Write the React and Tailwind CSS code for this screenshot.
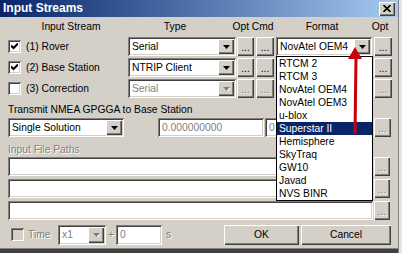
import React from 'react';

const sunken =
  'shadow-[inset_1px_1px_0_#808080,inset_-1px_-1px_0_#ffffff,inset_2px_2px_0_#404040,inset_-2px_-2px_0_#d4d0c8]';
const raised =
  'shadow-[inset_1px_1px_0_#ffffff,inset_-1px_-1px_0_#404040,inset_-2px_-2px_0_#808080]';
const grayText = 'text-[#808080] [text-shadow:1px_1px_0_#ffffff]';

const formats = [
  'RTCM 2',
  'RTCM 3',
  'NovAtel OEM4',
  'NovAtel OEM3',
  'u-blox',
  'Superstar II',
  'Hemisphere',
  'SkyTraq',
  'GW10',
  'Javad',
  'NVS BINR',
];

const Arrow = ({ disabled }) => (
  <svg width="7" height="4" viewBox="0 0 7 4" className="block">
    {disabled && <polygon points="1,1 8,1 4.5,4.5" fill="#ffffff" />}
    <polygon points="0,0 7,0 3.5,4" fill={disabled ? '#808080' : '#000000'} />
  </svg>
);

const Combo = ({ value, w, h = 'h-[19px]', disabled, className = '' }) => (
  <div className={`${sunken} bg-white flex p-[2px] ${h} ${w} ${className}`}>
    <div
      className={`flex-1 flex items-center pl-[2px] overflow-hidden whitespace-nowrap ${
        disabled ? 'text-[#808080]' : 'text-black'
      }`}
    >
      {value}
    </div>
    <div className={`${raised} bg-[#d4d0c8] w-[16px] flex items-center justify-center`}>
      <Arrow disabled={disabled} />
    </div>
  </div>
);

const Field = ({ value, w, h = 'h-[19px]', className = '' }) => (
  <div className={`${sunken} bg-white flex items-center pl-[4px] text-[#808080] ${h} ${w} ${className}`}>
    {value}
  </div>
);

const Dots = ({ w = 'w-[17px]', disabled, className = '' }) => (
  <div
    className={`${raised} bg-[#d4d0c8] h-[19px] ${w} flex items-end justify-center pb-[4px] leading-[9px] ${
      disabled ? grayText : 'text-black'
    } ${className}`}
  >
    ...
  </div>
);

const Check = ({ checked, disabled }) => (
  <div
    className={`${sunken} w-[13px] h-[13px] flex items-center justify-center ${
      disabled ? 'bg-[#d4d0c8]' : 'bg-white'
    }`}
  >
    {checked && (
      <svg width="7" height="7" viewBox="0 0 7 7" className="block">
        <path d="M0 2.5 L2.5 5 L7 0.5" stroke="#000" strokeWidth="2" fill="none" />
      </svg>
    )}
  </div>
);

// format value is only shown on the first row; the others sit under the open list
const StreamRow = ({ label, checked, type, format = '', typeDisabled, btnDisabled }) => (
  <div className="h-[19px] flex items-center">
    <div className="w-[128px] flex items-center pl-[8px]">
      <Check checked={checked} />
      <span className="ml-[5px]">{label}</span>
    </div>
    <Combo w="w-[108px]" value={type} disabled={typeDisabled} />
    <Dots className="ml-[1px]" disabled={btnDisabled} />
    <Dots className="ml-[2px]" w="w-[18px]" disabled={btnDisabled} />
    <Combo className="ml-[2px]" w="w-[96px]" value={format} />
    <Dots className="ml-[2px]" w="w-[18px]" disabled={btnDisabled} />
  </div>
);

export default function App() {
  return (
    <div className="w-[402px] h-[253px] flex bg-[#d4d0c8] overflow-hidden font-['Liberation_Sans',Arial,sans-serif] text-[10.3px] text-black">
      <div className="relative w-[398px] h-full flex flex-col">
        {/* title bar */}
        <div className="h-[17px] flex items-center justify-between bg-linear-to-r from-[#0a246a] to-[#a6caf0] pl-[3px] pr-[3px]">
          <span className="text-white font-bold text-[12px] leading-[17px]">Input Streams</span>
          <div className={`${raised} bg-[#d4d0c8] w-[16px] h-[14px] flex items-center justify-center`}>
            <svg width="8" height="7" viewBox="0 0 8 7" className="block">
              <path d="M0.5 0 L7.5 7 M7.5 0 L0.5 7" stroke="#000" strokeWidth="1.6" />
            </svg>
          </div>
        </div>

        {/* column headers */}
        <div className="h-[20px] flex items-center">
          <div className="w-[16px]" />
          <div className="w-[110px] text-center">Input Stream</div>
          <div className="w-[98px] text-center">Type</div>
          <div className="w-[58px] text-center">Opt Cmd</div>
          <div className="w-[80px] text-center">Format</div>
          <div className="w-[36px] text-center">Opt</div>
        </div>

        <div className="flex flex-col gap-[2px]">
          <StreamRow label="(1) Rover" checked type="Serial" format="NovAtel OEM4" />
          <StreamRow label="(2) Base Station" checked type="NTRIP Client" />
          <StreamRow label="(3) Correction" type="Serial" typeDisabled btnDisabled />
        </div>

        <div className="mt-[4px] h-[16px] flex items-center pl-[8px]">Transmit NMEA GPGGA to Base Station</div>

        <div className="h-[19px] flex items-center pl-[8px]">
          <Combo w="w-[116px]" value="Single Solution" />
          <Field className="ml-[34px]" w="w-[106px]" value="0.000000000" />
          <Field className="ml-[1px]" w="w-[108px]" value="0" />
          <Dots className="ml-[1px]" disabled />
        </div>

        <div className={`mt-[5px] h-[15px] flex items-center pl-[8px] ${grayText}`}>Input File Paths</div>

        <div className="flex flex-col gap-[3px]">
          {[0, 1, 2].map((i) => (
            <div key={i} className="h-[19px] flex items-center pl-[8px]">
              <Field w="w-[365px]" value="" />
              <Dots className="ml-[1px]" w="w-[16px]" disabled />
            </div>
          ))}
        </div>

        {/* bottom row */}
        <div className="mt-[4px] h-[21px] flex items-center">
          <div className="w-[58px] flex items-center pl-[11px]">
            <Check disabled />
            <span className={`ml-[4px] ${grayText}`}>Time</span>
          </div>
          <Combo w="w-[48px]" h="h-[20px]" value="x1" disabled />
          <div className={`w-[10px] text-center ${grayText}`}>+</div>
          <Field w="w-[46px]" h="h-[20px]" value="0" />
          <div className={`w-[62px] pl-[4px] ${grayText}`}>s</div>
          <div className={`${raised} bg-[#d4d0c8] w-[75px] h-[20px] flex items-center justify-center`}>OK</div>
          <div className={`${raised} bg-[#d4d0c8] ml-[2px] w-[90px] h-[20px] flex items-center justify-center`}>
            Cancel
          </div>
        </div>

        <div className="flex-1" />
        <div className="h-[5px] border-t border-[#808080] bg-[#404040]" />

        {/* open format dropdown */}
        <div className="absolute left-[276px] top-[56px] w-[97px] h-[145px] border border-black bg-white flex flex-col">
          {formats.map((f) => (
            <div
              key={f}
              className={`h-[13px] leading-[13px] pl-[2px] whitespace-nowrap ${
                f === 'Superstar II' ? 'bg-[#0a246a] text-white' : 'text-black'
              }`}
            >
              {f}
            </div>
          ))}
        </div>

        {/* annotation arrow */}
        <svg className="absolute left-0 top-0 pointer-events-none" width="398" height="253" viewBox="0 0 398 253">
          <line x1="355" y1="134" x2="356" y2="57" stroke="#c8000a" strokeWidth="3" />
          <polygon points="355,47 348,59 362,59" fill="#c8000a" />
        </svg>
      </div>
      <div className="w-[4px] h-full border-l border-[#808080] bg-[#e4e4e4]" />
    </div>
  );
}
